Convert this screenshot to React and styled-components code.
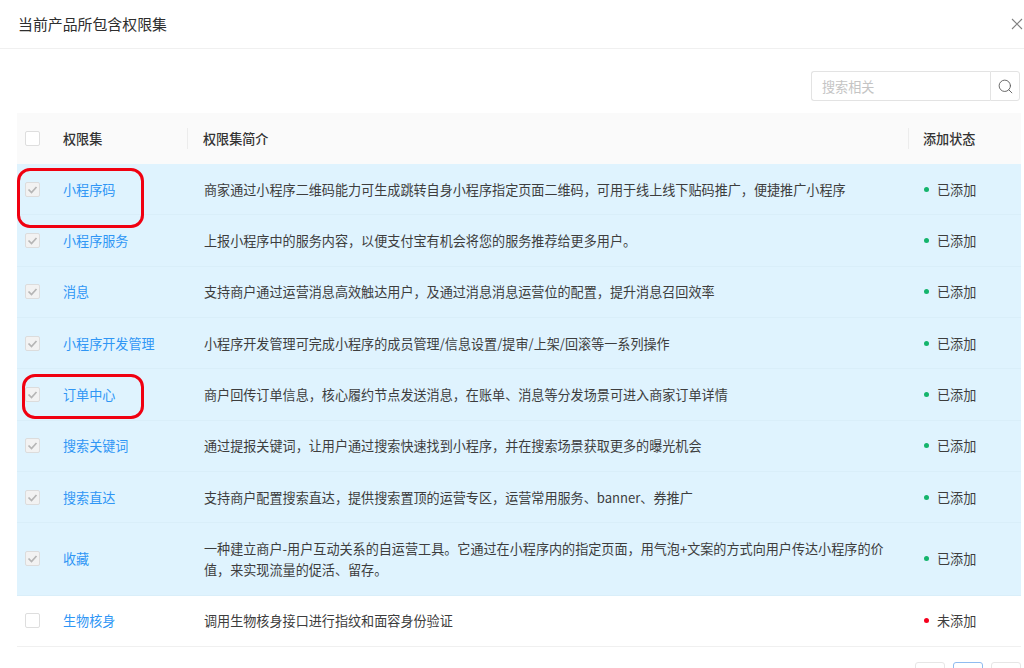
import React from "react"
import styled, { createGlobalStyle } from "styled-components"
import { Search } from "lucide-react"

const GlobalStyle = createGlobalStyle`
  html, body {
    margin: 0;
    height: 668px;
    overflow: hidden;
    background: #fff;
    font-family: "Noto Sans CJK SC", "Noto Sans", sans-serif;
    color: #3d3d3d;
  }
`

const Header = styled.header`
  height: 47px;
  padding: 0 1px 1px 18px;
  border-bottom: 1px solid #f0f0f0;
  display: flex;
  align-items: center;
  justify-content: space-between;
`

const Title = styled.h1`
  margin: 0;
  font-size: 14.9px;
  font-weight: 400;
  color: #2e2e2e;
`

const CloseIcon = styled.svg`
  width: 12px;
  height: 12px;
  stroke: #808080;
  stroke-width: 1.1;
  fill: none;
`

const Body = styled.main`
  padding: 22px 3px 0 17px;
`

const SearchBar = styled.div`
  display: flex;
  justify-content: flex-end;
  padding-right: 1px;
  margin-bottom: 12px;
`

const SearchInput = styled.input`
  width: 179px;
  height: 30px;
  box-sizing: border-box;
  padding: 0 10px;
  border: 1px solid #e3e3e3;
  border-right: 0;
  border-radius: 3px 0 0 3px;
  font: inherit;
  font-size: 13.1px;
  outline: none;
  &::placeholder {
    color: #c4c4c4;
  }
`

const SearchButton = styled.button`
  width: 30px;
  height: 30px;
  padding: 0;
  border: 1px solid #e3e3e3;
  border-radius: 0 3px 3px 0;
  background: #fff;
  color: #5e5e5e;
  display: flex;
  align-items: center;
  justify-content: center;
`

const Row = styled.div`
  position: relative;
  display: grid;
  grid-template-columns: 30px 140px 721px 113px;
  align-items: center;
  font-size: 13.1px;
  line-height: 21px;
  padding: 14.66px 0;
  background: ${p => (p.$added ? "#dff3fe" : "#fff")};
  border-bottom: 1px solid ${p => (p.$added ? "#d9eef9" : "#f0f0f0")};
`

const HeadRow = styled(Row)`
  padding: 15px 0;
  background: #fafafa;
  border-bottom: 0;
  color: #333;
  font-weight: 500;
`

const Cell = styled.div`
  padding-left: 16px;
`

const DescCell = styled(Cell)`
  padding-left: 17px;
`

const HeadCell = styled(Cell)`
  position: relative;
  padding-left: ${p => p.$pad}px;
  &::before {
    content: "";
    position: absolute;
    left: 0;
    top: 0;
    width: 1px;
    height: 21px;
    background: #ececec;
  }
`

const CheckCell = styled.div`
  padding-left: 8px;
  display: flex;
`

const Checkbox = styled.span`
  width: 15px;
  height: 15px;
  box-sizing: border-box;
  border-radius: 2px;
  border: 1px solid ${p => (p.$checked ? "#dcdcdc" : "#dedede")};
  background: ${p => (p.$checked ? "#f2f2f2" : "#fff")};
  display: flex;
  align-items: center;
  justify-content: center;
`

const CheckMark = styled.svg`
  width: 11px;
  height: 11px;
  fill: none;
  stroke: #b5b5b5;
  stroke-width: 1.7;
`

const NameLink = styled.a`
  color: #2f96f5;
  text-decoration: none;
`

const Status = styled(Cell)`
  display: flex;
  align-items: center;
  gap: 8px;
  &::before {
    content: "";
    width: 5px;
    height: 5px;
    border-radius: 50%;
    background: ${p => (p.$added ? "#14b46c" : "#f5001d")};
  }
`

const Highlight = styled.span`
  position: absolute;
  z-index: 2;
  left: ${p => p.$left}px;
  top: ${p => p.$top}px;
  width: ${p => p.$width}px;
  height: ${p => p.$height}px;
  box-sizing: border-box;
  border: 3px solid #f00010;
  border-radius: 13px;
  pointer-events: none;
`

const Pager = styled.nav`
  display: flex;
  justify-content: flex-end;
  gap: 8px;
  padding-top: 15px;
`

const PageButton = styled.button`
  width: 30px;
  height: 30px;
  padding: 0;
  border-radius: 3px;
  background: #fff;
  border: 1px solid ${p => (p.$active ? "#8fbcf0" : "#e6e6e6")};
`

const rows = [
  { name: "小程序码", desc: "商家通过小程序二维码能力可生成跳转自身小程序指定页面二维码，可用于线上线下贴码推广，便捷推广小程序", added: true, mark: { left: 0, top: 4, width: 127, height: 60 } },
  { name: "小程序服务", desc: "上报小程序中的服务内容，以便支付宝有机会将您的服务推荐给更多用户。", added: true },
  { name: "消息", desc: "支持商户通过运营消息高效触达用户，及通过消息消息运营位的配置，提升消息召回效率", added: true },
  { name: "小程序开发管理", desc: "小程序开发管理可完成小程序的成员管理/信息设置/提审/上架/回滚等一系列操作", added: true },
  { name: "订单中心", desc: "商户回传订单信息，核心履约节点发送消息，在账单、消息等分发场景可进入商家订单详情", added: true, mark: { left: 5, top: 5, width: 122, height: 45 } },
  { name: "搜索关键词", desc: "通过提报关键词，让用户通过搜索快速找到小程序，并在搜索场景获取更多的曝光机会", added: true },
  { name: "搜索直达", desc: "支持商户配置搜索直达，提供搜索置顶的运营专区，运营常用服务、banner、券推广", added: true },
  { name: "收藏", desc: "一种建立商户-用户互动关系的自运营工具。它通过在小程序内的指定页面，用气泡+文案的方式向用户传达小程序的价值，来实现流量的促活、留存。", added: true },
  { name: "生物核身", desc: "调用生物核身接口进行指纹和面容身份验证", added: false },
]

export default function App() {
  return (
    <>
      <GlobalStyle />
      <Header>
        <Title>当前产品所包含权限集</Title>
        <CloseIcon viewBox="0 0 12 12">
          <path d="M1 1l10 10M11 1L1 11" />
        </CloseIcon>
      </Header>
      <Body>
        <SearchBar>
          <SearchInput placeholder="搜索相关" />
          <SearchButton>
            <Search size={17} strokeWidth={1.3} />
          </SearchButton>
        </SearchBar>
        <HeadRow>
          <CheckCell>
            <Checkbox />
          </CheckCell>
          <Cell>权限集</Cell>
          <HeadCell $pad={16}>权限集简介</HeadCell>
          <HeadCell $pad={15}>添加状态</HeadCell>
        </HeadRow>
        {rows.map(row => (
          <Row key={row.name} $added={row.added}>
            <CheckCell>
              <Checkbox $checked={row.added}>
                {row.added && (
                  <CheckMark viewBox="0 0 11 11">
                    <path d="M1.5 5.5l3 3 5-5.5" />
                  </CheckMark>
                )}
              </Checkbox>
            </CheckCell>
            <Cell>
              <NameLink href="#">{row.name}</NameLink>
            </Cell>
            <DescCell>{row.desc}</DescCell>
            <Status $added={row.added}>{row.added ? "已添加" : "未添加"}</Status>
            {row.mark && (
              <Highlight
                $left={row.mark.left}
                $top={row.mark.top}
                $width={row.mark.width}
                $height={row.mark.height}
              />
            )}
          </Row>
        ))}
        <Pager>
          <PageButton />
          <PageButton $active />
          <PageButton />
        </Pager>
      </Body>
    </>
  )
}
